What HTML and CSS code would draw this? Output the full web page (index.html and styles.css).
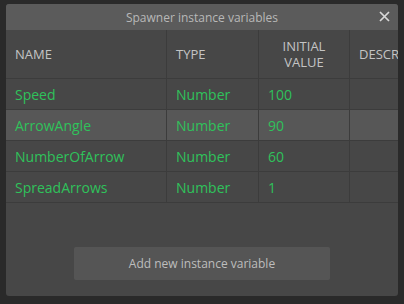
FILE: index.html
```html
<!DOCTYPE html>
<html>
    <head>
        <meta charset="utf-8">
        <title>Instance variables</title>
        <link rel="stylesheet" href="styles.css">
    </head>
    <body>
        <div class="dialog">
            <div class="title">
                <span>Spawner instance variables</span>
                <svg class="close" width="11" height="11" viewBox="0 0 11 11">
                    <path d="M1 1L10 10M10 1L1 10" stroke="#d8d8d8" stroke-width="1.7" fill="none"/>
                </svg>
            </div>
            <div class="grid">
                <table class="vars">
                    <tr class="head">
                        <th class="c-name">NAME</th>
                        <th class="c-type">TYPE</th>
                        <th class="c-val">INITIAL<br>VALUE</th>
                        <th class="c-desc">DESCRIPTION</th>
                    </tr>
                    <tr>
                        <td>Speed</td>
                        <td>Number</td>
                        <td>100</td>
                        <td></td>
                    </tr>
                    <tr class="sel">
                        <td>ArrowAngle</td>
                        <td>Number</td>
                        <td>90</td>
                        <td></td>
                    </tr>
                    <tr>
                        <td>NumberOfArrow</td>
                        <td>Number</td>
                        <td>60</td>
                        <td></td>
                    </tr>
                    <tr>
                        <td>SpreadArrows</td>
                        <td>Number</td>
                        <td>1</td>
                        <td></td>
                    </tr>
                </table>
            </div>
            <div class="footer">
                <button type="button" class="add">Add new instance variable</button>
            </div>
        </div>
    </body>
</html>
```

FILE: styles.css
```css
body{
    margin: 0;
    background-color: #2a2a2a;
    font-family: "Open Sans", "Noto Sans", sans-serif;
    font-size: 13px;
}
.dialog{
    margin: 4px 6px 0 6px;
    width: 392px;
    height: 292px;
    background-color: #474747;
    border-radius: 3px;
    overflow: hidden;
    display: flex;
    flex-direction: column;
}
.title{
    height: 26px;
    background-color: #5b5b5b;
    color: #b8b8b8;
    display: flex;
    align-items: center;
    justify-content: center;
    position: relative;
    font-size: 12px;
}
.close{
    position: absolute;
    right: 8px;
    top: 7px;
}
.grid{
    overflow: hidden;
}
.vars{
    border-collapse: collapse;
    table-layout: fixed;
    width: 431px;
}
.vars th, .vars td{
    border-right: 1px solid #3c3c3c;
    border-bottom: 1px solid #3c3c3c;
    text-align: left;
    padding: 0 0 0 9px;
    white-space: nowrap;
    overflow: hidden;
}
.vars th{
    height: 48px;
    color: #c4c4c4;
    font-weight: normal;
    line-height: 16px;
    font-size: 13px;
}
.vars td{
    height: 30px;
    color: #2fc25b;
    font-size: 14px;
}
.vars .c-name{ width: 151px; }
.vars .c-type{ width: 82px; }
.vars .c-val{ width: 90px; text-align: center; padding: 0; }
.vars .c-desc{ width: 80px; }
.vars tr.sel td{
    background-color: #575757;
}
.footer{
    flex: 1;
    display: flex;
    justify-content: center;
    align-items: flex-end;
    padding-bottom: 16px;
}
.add{
    width: 256px;
    height: 33px;
    border: none;
    border-radius: 2px;
    background-color: #555555;
    color: #bdbdbd;
    font-family: "Open Sans", "Noto Sans", sans-serif;
    font-size: 12px;
}
```
